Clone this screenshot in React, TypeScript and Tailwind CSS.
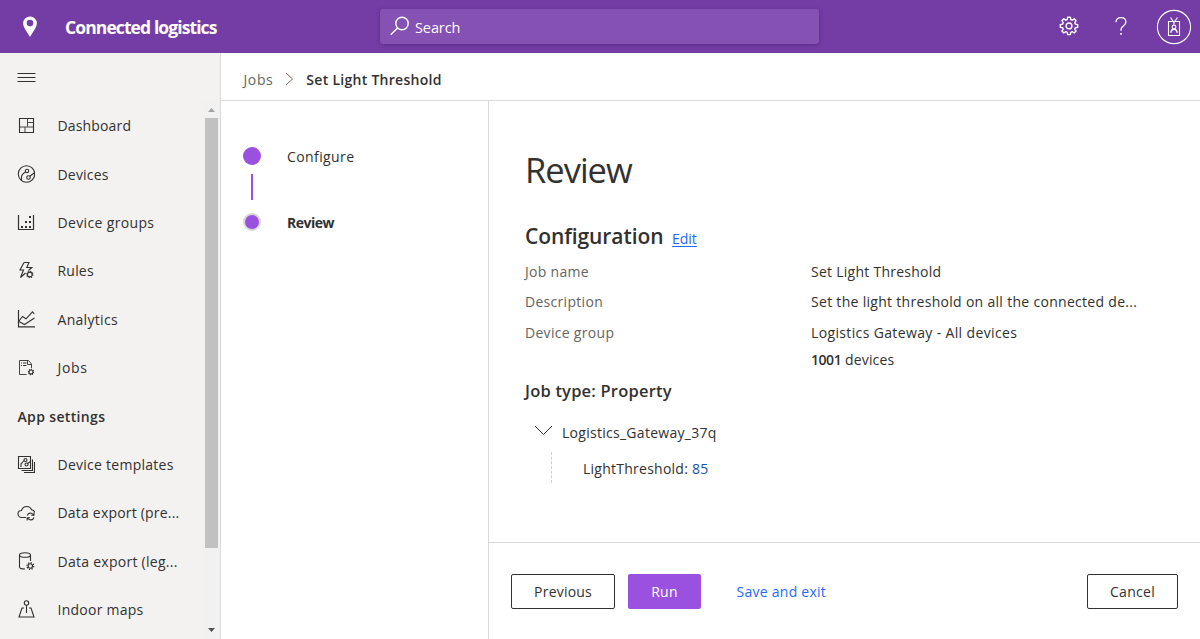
import React, { type ReactNode } from "react";

function Icon({ children, className = "" }: { children: ReactNode; className?: string }) {
  return (
    <svg
      width="18"
      height="18"
      viewBox="0 0 18 18"
      fill="none"
      stroke="#323130"
      strokeWidth="1.1"
      className={"shrink-0 " + className}
    >
      {children}
    </svg>
  );
}

const icons: Record<string, ReactNode> = {
  dashboard: (
    <Icon>
      <path d="M2.5 2.5h14v14h-14z" />
      <path d="M10.5 2.5v8M10.5 6.500h6M2.500 11h14M8 11v5.500" strokeWidth="0.9" />
    </Icon>
  ),
  devices: (
    <Icon>
      <circle cx="9.500" cy="9" r="8.200" />
      <circle cx="10" cy="6" r="1.700" />
      <circle cx="11.500" cy="12.500" r="1.800" />
      <path d="M8.500 7C6 8.500 4.500 9.500 4.500 12v3M12.800 11.200L17.200 8" />
    </Icon>
  ),
  groups: (
    <Icon>
      <path d="M1.500 2v14.500h15V2" strokeWidth="1.200" />
      <path
        d="M4 13h2v2H4zM8 13h2v2H8zM12 13h2v2h-2zM8 8h2v2H8zM12 8h2v2h-2zM12 3h2v2h-2z"
        fill="#323130"
        stroke="none"
      />
    </Icon>
  ),
  rules: (
    <Icon>
      <path d="M7 1.500h5L9.800 6.500h5L11.500 9.500M7 1.500L3 9h3.500L3.500 16.500l5-4.500" />
      <circle cx="12.800" cy="13.500" r="2.400" />
      <circle cx="12.800" cy="13.500" r="3" strokeDasharray="1.100 1.250" strokeWidth="1.300" />
    </Icon>
  ),
  analytics: (
    <Icon>
      <path d="M1.500 0v16.800H18" strokeWidth="1.200" />
      <path d="M2 11l3.500-4.500L9 8.800l6.500-7 1.800 2.200M2 11.500l5.500 3L17.500 8" />
    </Icon>
  ),
  jobs: (
    <Icon>
      <path d="M9.500 16.500h-7v-14h9l3 3.500v4M10.500 2.500v4h4" strokeWidth="0.9" />
      <path d="M4 5h1M6 5h3.500M4 7.500h1M6 7.500h3.500" />
      <circle cx="14" cy="14" r="2" />
      <circle cx="14" cy="14" r="2.600" strokeDasharray="1 1" />
    </Icon>
  ),
  templates: (
    <Icon>
      <path d="M1.500 1.500h12v12h-12z" />
      <path d="M15.500 4.500v11h-11M17.500 7v10.500H7" />
      <circle cx="8.500" cy="5" r="1.500" />
      <circle cx="9.500" cy="9.500" r="1.500" />
      <path d="M7 5.500L4 9v3M10.500 8.500l3-2" />
    </Icon>
  ),
  cloud: (
    <Icon className="mt-[2px]">
      <path d="M9 13.500H4.500a3.500 3.500 0 0 1 0-7c.8-2.700 3-4 5.300-4 2.300 0 4 1.400 4.700 3.300 1.700.2 3 1.400 3 2.700" />
      <path d="M10.200 11.500c.7-1.900 2.400-2.700 4.100-2.200 1 .3 1.700.9 2.200 1.700M17 8.500v2.700h-2.800M17 13.500c-.7 1.900-2.400 2.700-4.100 2.200-1-.3-1.700-.9-2.200-1.700M10.200 16.500v-2.700H13" />
    </Icon>
  ),
  database: (
    <Icon>
      <ellipse cx="8" cy="3" rx="5.500" ry="2.300" />
      <path d="M2.500 3v12c0 1.300 2.300 2 5.500 2M13.500 3v6" />
      <circle cx="13.300" cy="14" r="2.200" />
      <circle cx="13.300" cy="14" r="3.300" strokeDasharray="1.200 1.390" strokeWidth="1.400" />
    </Icon>
  ),
  maps: (
    <Icon>
      <circle cx="9.500" cy="3" r="2.200" />
      <path d="M9.500 5.200V13M7 8H5L2 17h15L14 8h-2" />
    </Icon>
  ),
};

const primary = [
  { icon: "dashboard", label: "Dashboard", tracking: "tracking-[0.15px]" },
  { icon: "devices", label: "Devices", tracking: "tracking-[0.2px]" },
  { icon: "groups", label: "Device groups", tracking: "tracking-[0.35px]" },
  { icon: "rules", label: "Rules", tracking: "tracking-[0.2px]" },
  { icon: "analytics", label: "Analytics", tracking: "tracking-[0.3px]" },
  { icon: "jobs", label: "Jobs", tracking: "tracking-[0.7px]" },
];

const settings = [
  { icon: "templates", label: "Device templates", tracking: "tracking-[0.26px]" },
  { icon: "cloud", label: "Data export (pre...", tracking: "tracking-[0.2px]" },
  { icon: "database", label: "Data export (leg...", tracking: "tracking-[0.27px]" },
  { icon: "maps", label: "Indoor maps", tracking: "tracking-[0.25px]" },
];

function NavRow({ icon, label, tracking }: { icon: string; label: string; tracking: string }) {
  return (
    <li className="flex h-[48.4px] shrink-0 items-center pl-[17px]">
      {icons[icon]}
      <span className={"ml-[22.5px] whitespace-nowrap pt-[2px] " + tracking}>{label}</span>
    </li>
  );
}

function Header() {
  return (
    <header className="flex h-[53px] shrink-0 items-center bg-[#743da6] text-white">
      <svg width="14" height="22" viewBox="0 0 14 22" className="ml-[23px] shrink-0">
        <path
          fillRule="evenodd"
          fill="#fff"
          d="M7 .5a6.800 6.800 0 0 1 6.900 6.800C13.900 11.500 9 17 7 21 5 17 .1 11.500.1 7.300A6.800 6.800 0 0 1 7 .5zm0 3.300a3.300 3.300 0 1 0 0 6.600 3.300 3.300 0 0 0 0-6.600z"
        />
      </svg>
      <h1 className="ml-7 w-[315px] whitespace-nowrap text-[17.5px] font-bold tracking-[-0.9px]">
        Connected logistics
      </h1>
      <div className="flex h-[35px] w-[439px] items-center rounded-[3px] bg-[#8551b2] pl-2.5 shadow-[0_1px_4px_rgba(60,20,100,0.45)]">
        <svg width="20" height="20" viewBox="0 0 20 20" fill="none" stroke="#fff" strokeWidth="1.400" className="-mt-0.5">
          <circle cx="12" cy="7.500" r="6.200" />
          <path d="M7.600 11.900L.7 18.800" />
        </svg>
        <span className="ml-[5px] pt-[2px] text-[14.5px] tracking-[-0.1px]">Search</span>
      </div>
      <svg width="20" height="20" viewBox="0 0 20 20" fill="none" stroke="#fff" strokeWidth="1.400" className="-mt-0.5 ml-[239.5px]">
        <path
          strokeLinejoin="round"
          d="M8.700 1.200h2.600l.5 2.300 1.400.6 2-1.300 1.900 1.900-1.300 2 .6 1.400 2.300.5v2.600l-2.300.5-.6 1.400 1.300 2-1.900 1.900-2-1.300-1.400.6-.5 2.300H8.700l-.5-2.300-1.400-.6-2 1.300-1.900-1.900 1.300-2-.6-1.400-2.300-.5V8.600l2.300-.5.6-1.400-1.300-2 1.900-1.900 2 1.300 1.400-.6z"
        />
        <circle cx="10" cy="9.900" r="2.900" />
      </svg>
      <svg width="14" height="20" viewBox="0 0 14 20" fill="none" stroke="#fff" strokeWidth="1.300" className="-mt-0.5 ml-[35px]">
        <path d="M2 6.200C2 3.200 4 1.700 7 1.700s4.900 1.600 4.900 4.300c0 4-4.900 4-4.900 7.500v1.200" />
        <path d="M7 17v1.700" strokeWidth="1.600" />
      </svg>
      <svg width="36" height="36" viewBox="0 0 36 36" fill="none" stroke="#fff" strokeWidth="1.100" className="ml-7">
        <circle cx="18" cy="18" r="16.600" />
        <path d="M12.500 12.500h11v14h-11zM14.500 8.500l3.500 5 3.500-5M18 13.500v2" />
        <circle cx="18" cy="18" r="1.900" />
        <path d="M15 23.800c0-2.300 1.200-3.600 3-3.600s3 1.300 3 3.600" strokeWidth="1.400" />
      </svg>
    </header>
  );
}

function Sidebar() {
  return (
    <aside className="flex w-[221px] shrink-0 flex-col border-r border-[#dcdbda] bg-[#f3f2f1]">
      <div className="flex h-12 shrink-0 items-center pl-[17px]">
        <svg width="19" height="11" viewBox="0 0 19 11" stroke="#323130">
          <path d="M.5 1.500h18M.5 5.500h18M.5 9.500h18" />
        </svg>
      </div>
      <div className="flex min-h-0 flex-1">
        <nav className="min-w-0 flex-1 overflow-hidden pt-[0.1px]">
          <ul>
            {primary.map((r) => (
              <NavRow key={r.label} {...r} />
            ))}
          </ul>
          <h2 className="flex h-[48.4px] items-center pl-[17.5px] pt-[2px] font-semibold tracking-[0.35px]">App settings</h2>
          <ul>
            {settings.map((r) => (
              <NavRow key={r.label} {...r} />
            ))}
          </ul>
        </nav>
        <div className="flex w-[17px] flex-col items-center bg-[#f1f1f1]">
          <svg width="7" height="4" viewBox="0 0 7 4" className="mt-[7px] shrink-0">
            <path d="M0 4L3.500 0 7 4z" fill="#a3a3a3" />
          </svg>
          <div className="mt-[6px] h-[430px] w-[13px] shrink-0 bg-[#c1c1c1]" />
          <svg width="7" height="4" viewBox="0 0 7 4" className="mb-[7px] mt-auto shrink-0">
            <path d="M0 0L3.500 4 7 0z" fill="#505050" />
          </svg>
        </div>
      </div>
    </aside>
  );
}

function Steps() {
  return (
    <section className="flex w-[268px] shrink-0 flex-col border-r border-[#d9d9d9] pl-[22px] pt-[46px]">
      <div className="flex h-[18px] items-center">
        <span className="size-[18px] rounded-full bg-[#9b51e0]" />
        <span className="ml-[26px] pt-[2px] tracking-[0.4px]">Configure</span>
      </div>
      <div className="ml-2 mt-[9px] h-[26px] w-0.5 bg-[#9b51e0]" />
      <div className="mt-[13px] flex h-[18px] items-center">
        <span className="size-[18px] rounded-full border-2 border-[#d8d8da] bg-[#9b51e0]" />
        <span className="ml-[26px] pt-[2px] font-bold tracking-[-0.5px]">Review</span>
      </div>
    </section>
  );
}

function Field({ label, children, className }: { label: string; children: ReactNode; className: string }) {
  return (
    <div className={"flex items-center " + className}>
      <dt className="w-[286px] tracking-[0.3px] text-[#666461]">{label}</dt>
      <dd className="whitespace-nowrap">{children}</dd>
    </div>
  );
}

function Review() {
  return (
    <section className="flex min-w-0 flex-1 flex-col">
      <div className="flex-1 pl-9">
        <h2 className="mt-[44px] h-[50px] text-[34.5px] leading-[50px] tracking-[-1px]">Review</h2>
        <div className="mt-[25px] flex h-8 items-baseline">
          <h3 className="text-[21px] font-semibold leading-8 tracking-[-0.08px]">Configuration</h3>
          <a className="ml-[8.5px] text-[#1f69ff] underline underline-offset-2">Edit</a>
        </div>
        <dl className="mt-[5px]">
          <Field label="Job name" className="h-[30px] tracking-[0.26px]">Set Light Threshold</Field>
          <Field label="Description" className="h-[30px] tracking-[0.3px]">Set the light threshold on all the connected de...</Field>
          <Field label="Device group" className="h-[31px] tracking-[0.36px]">Logistics Gateway - All devices</Field>
          <div className="flex h-6 items-center pl-[286px]">
            <dd className="tracking-[0.15px]"><span className="font-semibold tracking-[-0.45px]">1001</span> devices</dd>
          </div>
        </dl>
        <h3 className="mt-[3px] h-8 text-[16.5px] font-semibold leading-8 tracking-[0.2px]">Job type: Property</h3>
        <div className="mt-[14px] flex h-6 items-center pl-[9px]">
          <svg width="19" height="11" viewBox="0 0 19 11" fill="none" stroke="#323130" className="-mt-1.5">
            <path d="M1 1l8.500 8.500L18 1" />
          </svg>
          <span className="ml-[9px] tracking-[0.28px]">Logistics_Gateway_37q</span>
        </div>
        <div className="ml-[26px] mt-[7px] flex h-[31px] items-center border-l border-dashed border-[#cfcfcf] pl-[31px] pt-[2px]">
          <span className="tracking-[0.25px]">LightThreshold: <span className="text-[#1353b5]">85</span></span>
        </div>
      </div>
      <footer className="flex h-[97px] shrink-0 items-center border-t border-[#d9d9d9] pl-[22px] pr-[22px]">
        <button className="h-[35px] w-[104px] rounded-[2px] border border-[#323130] pt-[2px] tracking-[0.2px]">Previous</button>
        <button className="ml-[13px] h-[35px] w-[73px] rounded-[2px] bg-[#9b51e0] pt-[2px] text-white tracking-[0.3px]">Run</button>
        <a className="ml-[35.5px] pt-[2px] tracking-[0.26px] text-[#1f69ff]">Save and exit</a>
        <button className="ml-auto h-[35px] w-[91px] rounded-[2px] border border-[#323130] pt-[2px] tracking-[0.3px]">Cancel</button>
      </footer>
    </section>
  );
}

export default function App() {
  return (
    <div className="flex h-[639px] w-[1200px] flex-col overflow-hidden bg-white font-['Open_Sans',sans-serif] text-[14px] leading-5 text-[#323130]">
      <Header />
      <div className="flex min-h-0 flex-1">
        <Sidebar />
        <main className="flex min-w-0 flex-1 flex-col">
          <div className="flex h-12 shrink-0 items-center border-b border-[#d9d9d9] pl-[22.5px] pt-1.5">
            <span className="tracking-[0.6px] text-[#666461]">Jobs</span>
            <svg width="9" height="14" viewBox="0 0 9 14" fill="none" stroke="#8a6a60" className="-mt-0.5 ml-3">
              <path d="M1 1l6.500 6L1 13" />
            </svg>
            <span className="ml-3 font-semibold tracking-[0.28px]">Set Light Threshold</span>
          </div>
          <div className="flex min-h-0 flex-1">
            <Steps />
            <Review />
          </div>
        </main>
      </div>
    </div>
  );
}
